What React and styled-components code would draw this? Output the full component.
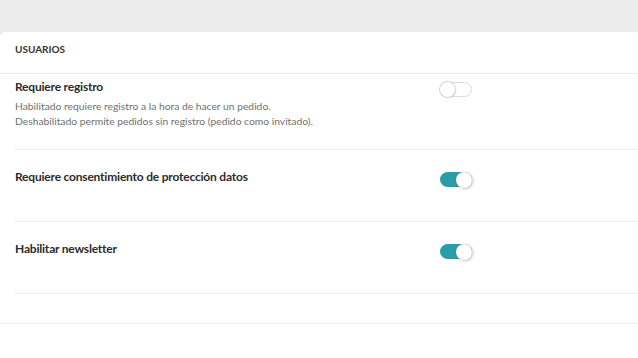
import React, { useState } from 'react'
import styled, { createGlobalStyle } from 'styled-components'

const Global = createGlobalStyle`
    html, body {
        margin: 0;
        padding: 0;
        background: #ececec;
        font-family: Lato, 'Liberation Sans', sans-serif;
        overflow: hidden;
    }
`

const Page = styled.div`
    width: 638px;
    height: 358px;
    padding-top: 32px;
    box-sizing: border-box;
`

const Card = styled.section`
    background: #fff;
    border-top-left-radius: 5px;
    height: 326px;
    margin-right: -10px;
`

const Header = styled.div`
    height: 42px;
    box-sizing: border-box;
    padding: 10px 0 0 15px;
    border-bottom: 1px solid #ebebeb;

    h3 {
        margin: 0;
        font-size: 10px;
        line-height: 15px;
        font-weight: 700;
        color: #333;
    }
`

const List = styled.div`
    padding-left: 15px;
    border-bottom: 1px solid #ebebeb;
    padding-bottom: 29px;
`

const Row = styled.div`
    display: grid;
    grid-template-columns: 425px 32px;
    height: ${p => p.$first ? 76 : 72}px;
    border-bottom: 1px solid #ebebeb;
    box-sizing: border-box;
    padding-top: ${p => p.$first ? 5 : 19}px;
`

const Title = styled.div`
    font-size: 12px;
    font-weight: 700;
    color: #2b2b2b;
    line-height: 15px;
    letter-spacing: -0.2px;
`

const Desc = styled.p`
    margin: 5px 0 0;
    font-size: 10.3px;
    line-height: 15px;
    color: #707070;
`

const Switch = styled.button`
    position: relative;
    width: 32px;
    height: 15px;
    margin-top: 3px;
    padding: 0;
    border-radius: 8px;
    cursor: pointer;
    border: 1px solid ${p => p.$on ? '#2a9da8' : '#dcdcdc'};
    background: ${p => p.$on ? '#2a9da8' : '#fff'};

    span {
        position: absolute;
        top: ${p => p.$on ? '-1.5px' : '-1px'};
        left: ${p => p.$on ? '15px' : '-1px'};
        width: ${p => p.$on ? 16 : 15}px;
        height: ${p => p.$on ? 16 : 15}px;
        border-radius: 50%;
        background: #fff;
        box-shadow: ${p => p.$on ? '1px 1px 3px rgba(0,0,0,0.25)' : '0 0 0 1px #d6d2ce, 1px 1px 2px rgba(0,0,0,0.12)'};
    }
`

const settings = [
    {
        id: 'registro',
        title: 'Requiere registro',
        desc: ['Habilitado requiere registro a la hora de hacer un pedido.', 'Deshabilitado permite pedidos sin registro (pedido como invitado).'],
        on: false
    },
    { id: 'rgpd', title: 'Requiere consentimiento de protección datos', on: true },
    { id: 'newsletter', title: 'Habilitar newsletter', on: true }
]

const App = () => {
    const [values, setValues] = useState(() => Object.fromEntries(settings.map(s => [s.id, s.on])))

    return (
        <Page>
            <Global />
            <Card>
                <Header><h3>USUARIOS</h3></Header>
                <List>
                    {settings.map((s, i) => (
                        <Row key={s.id} $first={i === 0}>
                            <div>
                                <Title>{s.title}</Title>
                                {s.desc && <Desc>{s.desc[0]}<br />{s.desc[1]}</Desc>}
                            </div>
                            <Switch
                                $on={values[s.id]}
                                onClick={() => setValues(v => ({ ...v, [s.id]: !v[s.id] }))}
                            >
                                <span />
                            </Switch>
                        </Row>
                    ))}
                </List>
            </Card>
        </Page>
    )
}

export default App
